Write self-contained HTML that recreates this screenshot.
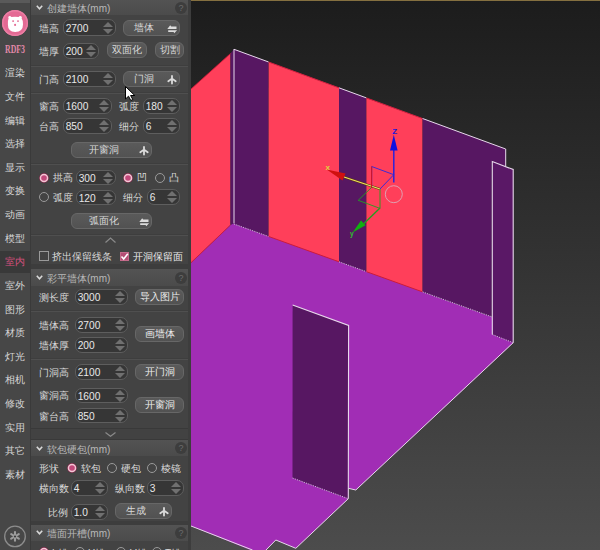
<!DOCTYPE html><html><head><meta charset="utf-8"><style>
*{margin:0;padding:0;box-sizing:border-box}
html,body{width:600px;height:550px;overflow:hidden;background:#444}
body{position:relative;font-family:"Liberation Sans",sans-serif}
.t{position:absolute;white-space:nowrap;line-height:14px;font-weight:500}
#side{position:absolute;left:0;top:0;width:30px;height:550px;background:#474747}
#pborder{position:absolute;left:30px;top:0;width:1px;height:550px;background:#3a3a3a}
#panel{position:absolute;left:31px;top:0;width:157px;height:550px;background:#434343}
#sb{position:absolute;left:188px;top:0;width:3px;height:550px;background:#3d3d3d}
.hdr{position:absolute;left:31px;width:157px;background:linear-gradient(#535353,#4b4b4b)}
.sep{position:absolute;left:31px;width:157px;height:2px;background:#3e3e3e;border-bottom:1px solid #4f4f4f}
.q{position:absolute;width:12px;height:12px;border-radius:50%;background:#3d3d3d;color:#6c6c6c;font-size:9px;line-height:12px;text-align:center}
.inp{position:absolute;background:#363636;border:1px solid #5e5e5e;border-radius:7px;color:#e8e8e8;font-size:10.2px;overflow:hidden}
.inp span{position:absolute;left:1.7px;top:0.8px}
.inp i{position:absolute;right:2px;width:0;height:0}
.inp .up{border-left:5px solid transparent;border-right:5px solid transparent;border-bottom:5px solid #707070}
.inp .dn{border-left:5px solid transparent;border-right:5px solid transparent;border-top:5px solid #707070}
.inp .mid{display:none}
.btn{position:absolute;background:linear-gradient(#5a5a5a,#525252);border:1px solid #676767;border-radius:6px;color:#d8d8d8;font-size:10px;font-weight:500}
.btn.bright{color:#ececec}
.ic{position:absolute}
.rad{position:absolute;width:10px;height:10px;border-radius:50%;border:1.2px solid #9a9a9a}
.rad.on{border:1.9px solid #f3c6d5;background:#c2487a;box-shadow:0 0 0 0.6px #7a2a48}
.cb{position:absolute;width:10px;height:10px;border:1.2px solid #9a9a9a}
#vp{position:absolute;left:191px;top:0;width:409px;height:550px;background:linear-gradient(#1c1c1c 0%,#4c4c4c 100%)}
</style></head><body><div id="side"></div><div id="pborder"></div><div id="panel"></div><div id="sb"></div><div style="position:absolute;left:0;top:0;width:30px;height:3px;background:#5a5a5a"></div><div style="position:absolute;left:2.2px;top:9.9px;width:26px;height:26px;border-radius:50%;background:#e46a94;box-shadow:inset 0 0 0 1.5px #ec7ea4"></div><svg style="position:absolute;left:6px;top:15px" width="18" height="19" viewBox="0 0 18 19"><path d="M2.6 3.2Q1.6 1.6 3 1.2Q4.6 0.8 5.4 2Q9 1.7 12.6 2Q13.4 0.8 15 1.2Q16.6 1.6 15.6 3.2Q17 5 17 9.5Q17 16.8 9.2 17Q1.8 16.8 1.9 9.5Q1.8 5 2.6 3.2Z" fill="#fff"/><circle cx="7.1" cy="6.1" r="0.95" fill="#e46a94"/><circle cx="12" cy="6.1" r="0.95" fill="#e46a94"/><circle cx="9.1" cy="9.9" r="1.05" fill="#e46a94"/></svg><div class="t" style="left:5px;top:42px;font-family:'Liberation Serif',serif;font-weight:bold;font-size:11.5px;color:#e088a8;transform:scaleX(0.68);transform-origin:0 0">RDF3</div><div class="t" style="left:5px;top:66.3px;font-size:10px;color:#d6d6d6;">渲染</div><div class="t" style="left:5px;top:89.92px;font-size:10px;color:#d6d6d6;">文件</div><div class="t" style="left:5px;top:113.53999999999999px;font-size:10px;color:#d6d6d6;">编辑</div><div class="t" style="left:5px;top:137.16px;font-size:10px;color:#d6d6d6;">选择</div><div class="t" style="left:5px;top:160.78px;font-size:10px;color:#d6d6d6;">显示</div><div class="t" style="left:5px;top:184.4px;font-size:10px;color:#d6d6d6;">变换</div><div class="t" style="left:5px;top:208.01999999999998px;font-size:10px;color:#d6d6d6;">动画</div><div class="t" style="left:5px;top:231.64px;font-size:10px;color:#d6d6d6;">模型</div><div style="position:absolute;left:0;top:251px;width:30px;height:22px;background:#393939"></div><div class="t" style="left:5px;top:255.26px;font-size:10px;color:#d8507e;">室内</div><div class="t" style="left:5px;top:278.88px;font-size:10px;color:#d6d6d6;">室外</div><div class="t" style="left:5px;top:302.5px;font-size:10px;color:#d6d6d6;">图形</div><div class="t" style="left:5px;top:326.12px;font-size:10px;color:#d6d6d6;">材质</div><div class="t" style="left:5px;top:349.74px;font-size:10px;color:#d6d6d6;">灯光</div><div class="t" style="left:5px;top:373.36px;font-size:10px;color:#d6d6d6;">相机</div><div class="t" style="left:5px;top:396.98px;font-size:10px;color:#d6d6d6;">修改</div><div class="t" style="left:5px;top:420.6px;font-size:10px;color:#d6d6d6;">实用</div><div class="t" style="left:5px;top:444.22px;font-size:10px;color:#d6d6d6;">其它</div><div class="t" style="left:5px;top:467.84000000000003px;font-size:10px;color:#d6d6d6;">素材</div><svg style="position:absolute;left:0;top:520px" width="30" height="30" viewBox="0 0 30 30"><circle cx="15" cy="16.4" r="10.3" fill="none" stroke="#8c8c8c" stroke-width="1.3"/><g stroke="#9c9c9c" stroke-width="2.1" stroke-linecap="round"><line x1="15" y1="12" x2="15" y2="20.8"/><line x1="11.2" y1="14.2" x2="18.8" y2="18.6"/><line x1="11.2" y1="18.6" x2="18.8" y2="14.2"/></g><circle cx="15" cy="16.4" r="1" fill="#333"/></svg><div class="hdr" style="top:0px;height:15px"></div><svg style="position:absolute;left:35.5px;top:5.2px" width="7" height="5" viewBox="0 0 7 5"><path d="M0.8 0.8L3.5 3.8L6.2 0.8" stroke="#d8d8d8" stroke-width="1.6" fill="none"/></svg><div class="t" style="left:47px;top:2.0px;font-size:10px;color:#b8b8b8;font-weight:500">创建墙体(mm)</div><div class="q" style="left:175px;top:1.5px">?</div><div class="t" style="left:39px;top:21.5px;font-size:10px;color:#d8d8d8;">墙高</div><div class="inp" style="left:63px;top:19px;width:53px;height:17px"><span style="line-height:15px">2700</span><i class="up" style="top:1.9000000000000004px"></i><i class="dn" style="top:8.5px"></i></div><div class="btn" style="left:123px;top:20px;width:57px;height:16px"><span style="position:absolute;left:0;width:40px;text-align:center;line-height:14px">墙体</span><svg class="ic" style="left:42.5px;top:3.5px" width="11" height="9" viewBox="0 0 11 9"><path d="M0.3 3.9H9.5V1.6H4.2L3.2 0.3Z M1.2 5.3H10.1L7.2 8.2L6.6 7H1.2Z" fill="#dcdcdc"/></svg></div><div class="t" style="left:39px;top:44.5px;font-size:10px;color:#d8d8d8;">墙厚</div><div class="inp" style="left:63px;top:43px;width:36px;height:16px"><span style="line-height:14px">200</span><i class="up" style="top:1.4000000000000004px"></i><i class="dn" style="top:8.0px"></i></div><div class="btn" style="left:107px;top:42px;width:40px;height:16px"><span style="position:absolute;left:0;width:38px;text-align:center;line-height:14px">双面化</span></div><div class="btn" style="left:155px;top:42px;width:29px;height:16px"><span style="position:absolute;left:0;width:27px;text-align:center;line-height:14px">切割</span></div><div class="sep" style="top:64.6px"></div><div class="t" style="left:39px;top:72.5px;font-size:10px;color:#d8d8d8;">门高</div><div class="inp" style="left:63px;top:71px;width:53px;height:16px"><span style="line-height:14px">2100</span><i class="up" style="top:1.4000000000000004px"></i><i class="dn" style="top:8.0px"></i></div><div class="btn" style="left:123px;top:71px;width:57px;height:16px"><span style="position:absolute;left:0;width:40px;text-align:center;line-height:14px">门洞</span><svg class="ic" style="left:43.4px;top:3.3px" width="10" height="10" viewBox="0 0 10 10"><path d="M5 1V8.5M1.3 6.2L5 3.6L8.7 6.2" stroke="#dcdcdc" stroke-width="1.8" fill="none" stroke-linecap="round"/></svg></div><div class="sep" style="top:91.6px"></div><div class="t" style="left:39px;top:99.5px;font-size:10px;color:#d8d8d8;">窗高</div><div class="inp" style="left:63px;top:98px;width:49px;height:16px"><span style="line-height:14px">1600</span><i class="up" style="top:1.4000000000000004px"></i><i class="dn" style="top:8.0px"></i></div><div class="t" style="left:119px;top:99.5px;font-size:10px;color:#d8d8d8;">弧度</div><div class="inp" style="left:143px;top:98px;width:37px;height:16px"><span style="line-height:14px">180</span><i class="up" style="top:1.4000000000000004px"></i><i class="dn" style="top:8.0px"></i></div><div class="t" style="left:39px;top:119.5px;font-size:10px;color:#d8d8d8;">台高</div><div class="inp" style="left:63px;top:118px;width:49px;height:16px"><span style="line-height:14px">850</span><i class="up" style="top:1.4000000000000004px"></i><i class="dn" style="top:8.0px"></i></div><div class="t" style="left:119px;top:119.5px;font-size:10px;color:#d8d8d8;">细分</div><div class="inp" style="left:143px;top:118px;width:37px;height:16px"><span style="line-height:14px">6</span><i class="up" style="top:1.4000000000000004px"></i><i class="dn" style="top:8.0px"></i></div><div class="btn" style="left:71px;top:142px;width:81px;height:16px"><span style="position:absolute;left:0;width:64px;text-align:center;line-height:14px">开窗洞</span><svg class="ic" style="left:67.4px;top:3.3px" width="10" height="10" viewBox="0 0 10 10"><path d="M5 1V8.5M1.3 6.2L5 3.6L8.7 6.2" stroke="#dcdcdc" stroke-width="1.8" fill="none" stroke-linecap="round"/></svg></div><div class="sep" style="top:162.8px"></div><svg style="position:absolute;left:38.2px;top:171.8px" width="12" height="12" viewBox="0 0 12 12"><circle cx="6" cy="6" r="4.9" fill="#7a2a48"/><circle cx="6" cy="6" r="4.3" fill="#f3c6d5"/><circle cx="6" cy="6" r="2.8" fill="#c2487a"/></svg><div class="t" style="left:53px;top:171.0px;font-size:10px;color:#d8d8d8;">拱高</div><div class="inp" style="left:76px;top:170px;width:40px;height:15px"><span style="line-height:13px">300</span><i class="up" style="top:0.9000000000000004px"></i><i class="dn" style="top:7.5px"></i></div><svg style="position:absolute;left:122px;top:171.5px" width="12" height="12" viewBox="0 0 12 12"><circle cx="6" cy="6" r="4.9" fill="#7a2a48"/><circle cx="6" cy="6" r="4.3" fill="#f3c6d5"/><circle cx="6" cy="6" r="2.8" fill="#c2487a"/></svg><div class="t" style="left:137px;top:171.0px;font-size:10px;color:#d8d8d8;">凹</div><div class="rad" style="left:155px;top:172.5px"></div><div class="t" style="left:169px;top:171.0px;font-size:10px;color:#d8d8d8;">凸</div><div class="rad" style="left:39px;top:192.2px"></div><div class="t" style="left:53px;top:191.0px;font-size:10px;color:#d8d8d8;">弧度</div><div class="inp" style="left:76px;top:190px;width:40px;height:15px"><span style="line-height:13px">120</span><i class="up" style="top:0.9000000000000004px"></i><i class="dn" style="top:7.5px"></i></div><div class="t" style="left:123px;top:191.0px;font-size:10px;color:#d8d8d8;">细分</div><div class="inp" style="left:147px;top:189px;width:33px;height:16px"><span style="line-height:14px">6</span><i class="up" style="top:1.4000000000000004px"></i><i class="dn" style="top:8.0px"></i></div><div class="btn" style="left:71px;top:213px;width:81px;height:16px"><span style="position:absolute;left:0;width:64px;text-align:center;line-height:14px">弧面化</span><svg class="ic" style="left:66.5px;top:3.5px" width="11" height="9" viewBox="0 0 11 9"><path d="M0.3 3.9H9.5V1.6H4.2L3.2 0.3Z M1.2 5.3H10.1L7.2 8.2L6.6 7H1.2Z" fill="#dcdcdc"/></svg></div><div class="sep" style="top:234px"></div><svg style="position:absolute;left:105px;top:237px" width="11" height="6" viewBox="0 0 11 6"><path d="M0.5 5.5L5.5 1L10.5 5.5" stroke="#8a8a8a" stroke-width="1.2" fill="none"/></svg><div class="cb" style="left:39px;top:251px"></div><div class="t" style="left:52px;top:249.5px;font-size:10px;color:#d8d8d8;">挤出保留线条</div><div class="cb" style="left:119.5px;top:251.5px;width:9.5px;height:9.5px;background:#b44d74;border-color:#c46a8a"></div><svg style="position:absolute;left:120px;top:252px" width="9" height="9" viewBox="0 0 9 9"><path d="M1.5 4.5L3.7 7L7.8 1.8" stroke="#fff" stroke-width="1.6" fill="none"/></svg><div class="t" style="left:133px;top:249.5px;font-size:9.6px;color:#e8e8e8;">开洞保留面</div><div style="position:absolute;left:31px;top:263.5px;width:157px;height:5.5px;background:#3d3d3d"></div><div class="hdr" style="top:269px;height:17px"></div><svg style="position:absolute;left:35.5px;top:275.2px" width="7" height="5" viewBox="0 0 7 5"><path d="M0.8 0.8L3.5 3.8L6.2 0.8" stroke="#d8d8d8" stroke-width="1.6" fill="none"/></svg><div class="t" style="left:47px;top:272.0px;font-size:10px;color:#b8b8b8;font-weight:500">彩平墙体(mm)</div><div class="q" style="left:175px;top:271.5px">?</div><div class="t" style="left:39px;top:290.5px;font-size:10px;color:#d8d8d8;">测长度</div><div class="inp" style="left:75px;top:289px;width:53px;height:16px"><span style="line-height:14px">3000</span><i class="up" style="top:1.4000000000000004px"></i><i class="dn" style="top:8.0px"></i></div><div class="btn bright" style="left:135px;top:289px;width:49px;height:16px"><span style="position:absolute;left:0;width:47px;text-align:center;line-height:14px">导入图片</span></div><div class="sep" style="top:310px"></div><div class="t" style="left:39px;top:318.5px;font-size:10px;color:#d8d8d8;">墙体高</div><div class="inp" style="left:75px;top:317px;width:53px;height:16px"><span style="line-height:14px">2700</span><i class="up" style="top:1.4000000000000004px"></i><i class="dn" style="top:8.0px"></i></div><div class="t" style="left:39px;top:338.5px;font-size:10px;color:#d8d8d8;">墙体厚</div><div class="inp" style="left:75px;top:337px;width:53px;height:16px"><span style="line-height:14px">200</span><i class="up" style="top:1.4000000000000004px"></i><i class="dn" style="top:8.0px"></i></div><div class="btn bright" style="left:135px;top:326px;width:49px;height:16px"><span style="position:absolute;left:0;width:47px;text-align:center;line-height:14px">画墙体</span></div><div class="sep" style="top:358px"></div><div class="t" style="left:39px;top:365.5px;font-size:10px;color:#d8d8d8;">门洞高</div><div class="inp" style="left:75px;top:364px;width:53px;height:16px"><span style="line-height:14px">2100</span><i class="up" style="top:1.4000000000000004px"></i><i class="dn" style="top:8.0px"></i></div><div class="btn bright" style="left:135px;top:364px;width:49px;height:16px"><span style="position:absolute;left:0;width:47px;text-align:center;line-height:14px">开门洞</span></div><div class="t" style="left:39px;top:388.5px;font-size:10px;color:#d8d8d8;">窗洞高</div><div class="inp" style="left:75px;top:388px;width:53px;height:15px"><span style="line-height:13px">1600</span><i class="up" style="top:0.9000000000000004px"></i><i class="dn" style="top:7.5px"></i></div><div class="t" style="left:39px;top:409.5px;font-size:10px;color:#d8d8d8;">窗台高</div><div class="inp" style="left:75px;top:408px;width:53px;height:15px"><span style="line-height:13px">850</span><i class="up" style="top:0.9000000000000004px"></i><i class="dn" style="top:7.5px"></i></div><div class="btn bright" style="left:135px;top:397px;width:49px;height:16px"><span style="position:absolute;left:0;width:47px;text-align:center;line-height:14px">开窗洞</span></div><div style="position:absolute;left:31px;top:428px;width:157px;height:12px;background:#424242;border-top:1px solid #393939;border-bottom:1px solid #393939"></div><svg style="position:absolute;left:105px;top:432px" width="11" height="5" viewBox="0 0 11 5"><path d="M0.5 0.5L5.5 4.3L10.5 0.5" stroke="#8a8a8a" stroke-width="1.2" fill="none"/></svg><div class="hdr" style="top:440px;height:16px"></div><svg style="position:absolute;left:35.5px;top:445.7px" width="7" height="5" viewBox="0 0 7 5"><path d="M0.8 0.8L3.5 3.8L6.2 0.8" stroke="#d8d8d8" stroke-width="1.6" fill="none"/></svg><div class="t" style="left:47px;top:442.5px;font-size:10px;color:#b8b8b8;font-weight:500">软包硬包(mm)</div><div class="q" style="left:175px;top:442.0px">?</div><div class="t" style="left:39px;top:462.0px;font-size:10px;color:#d8d8d8;">形状</div><svg style="position:absolute;left:66px;top:462.3px" width="12" height="12" viewBox="0 0 12 12"><circle cx="6" cy="6" r="4.9" fill="#7a2a48"/><circle cx="6" cy="6" r="4.3" fill="#f3c6d5"/><circle cx="6" cy="6" r="2.8" fill="#c2487a"/></svg><div class="t" style="left:81px;top:462.0px;font-size:10px;color:#d8d8d8;">软包</div><div class="rad" style="left:107px;top:463.3px"></div><div class="t" style="left:120.5px;top:462.0px;font-size:10px;color:#d8d8d8;">硬包</div><div class="rad" style="left:147px;top:463.3px"></div><div class="t" style="left:161px;top:462.0px;font-size:10px;color:#d8d8d8;">棱镜</div><div class="t" style="left:39px;top:481.5px;font-size:10px;color:#d8d8d8;">横向数</div><div class="inp" style="left:71px;top:480px;width:37px;height:16px"><span style="line-height:14px">4</span><i class="up" style="top:1.4000000000000004px"></i><i class="dn" style="top:8.0px"></i></div><div class="t" style="left:115px;top:481.5px;font-size:10px;color:#d8d8d8;">纵向数</div><div class="inp" style="left:147px;top:480px;width:37px;height:16px"><span style="line-height:14px">3</span><i class="up" style="top:1.4000000000000004px"></i><i class="dn" style="top:8.0px"></i></div><div class="t" style="left:47.5px;top:505.5px;font-size:10px;color:#d8d8d8;">比例</div><div class="inp" style="left:71px;top:504px;width:37px;height:16px"><span style="line-height:14px">1.0</span><i class="up" style="top:1.4000000000000004px"></i><i class="dn" style="top:8.0px"></i></div><div class="btn" style="left:115px;top:503px;width:57px;height:16px"><span style="position:absolute;left:0;width:40px;text-align:center;line-height:14px">生成</span><svg class="ic" style="left:43.4px;top:3.3px" width="10" height="10" viewBox="0 0 10 10"><path d="M5 1V8.5M1.3 6.2L5 3.6L8.7 6.2" stroke="#dcdcdc" stroke-width="1.8" fill="none" stroke-linecap="round"/></svg></div><div style="position:absolute;left:31px;top:520.5px;width:157px;height:4px;background:#3d3d3d"></div><div class="hdr" style="top:524.5px;height:16.5px"></div><svg style="position:absolute;left:35.5px;top:530.45px" width="7" height="5" viewBox="0 0 7 5"><path d="M0.8 0.8L3.5 3.8L6.2 0.8" stroke="#d8d8d8" stroke-width="1.6" fill="none"/></svg><div class="t" style="left:47px;top:527.25px;font-size:10px;color:#b8b8b8;font-weight:500">墙面开槽(mm)</div><div class="q" style="left:175px;top:526.75px">?</div><svg style="position:absolute;left:38px;top:546px" width="12" height="12" viewBox="0 0 12 12"><circle cx="6" cy="6" r="4.9" fill="#7a2a48"/><circle cx="6" cy="6" r="4.3" fill="#f3c6d5"/><circle cx="6" cy="6" r="2.8" fill="#c2487a"/></svg><div class="rad" style="left:74.5px;top:547px"></div><div class="rad" style="left:116px;top:547px"></div><div class="rad" style="left:151.5px;top:547px"></div><div class="t" style="left:52px;top:546.5px;font-size:10px;color:#d8d8d8;">L槽</div><div class="t" style="left:88px;top:546.5px;font-size:10px;color:#d8d8d8;">U槽</div><div class="t" style="left:130px;top:546.5px;font-size:10px;color:#d8d8d8;">V槽</div><div class="t" style="left:165px;top:546.5px;font-size:10px;color:#d8d8d8;">T槽</div><div id="vp"></div><svg style="position:absolute;left:0;top:0" width="600" height="550" viewBox="0 0 600 550"><defs><clipPath id="vc"><rect x="191" y="1" width="409" height="549"/></clipPath></defs><g clip-path="url(#vc)"><polygon points="191,89 230.5,53.5 230.5,225 191,262.7" fill="#ff3f5a" stroke="none" stroke-width="0"/><polygon points="230.5,53.5 234,49 234,223.3 230.5,225" fill="#571762" stroke="none" stroke-width="0"/><polygon points="191,262.7 230.5,225 234,223.3 491.8,316.808 513.4,342.7 355.8,490 348.3,488.3 348.3,498.7 295.8,548.3 275.8,540 265,551 252.5,551 191,526" fill="#a12db5" stroke="none" stroke-width="0"/><polygon points="234,49.3 268.6,61.998200000000004 268.6,236.45600000000002 234,224.0" fill="#571762" stroke="none" stroke-width="0"/><polygon points="268.6,61.998200000000004 339,87.835 339,261.8 268.6,236.45600000000002" fill="#ff3f5a" stroke="none" stroke-width="0"/><polygon points="339,87.835 366.4,97.89079999999998 366.4,271.664 339,261.8" fill="#571762" stroke="none" stroke-width="0"/><polygon points="366.4,97.89079999999998 422.6,118.5162 422.6,291.896 366.4,271.664" fill="#ff3f5a" stroke="none" stroke-width="0"/><polygon points="422.6,118.5162 505.7,149.01389999999998 505.7,166.4 491.8,161.6 491.8,316.808 422.6,291.896" fill="#571762" stroke="none" stroke-width="0"/><line x1="234" y1="49.3" x2="268.6" y2="61.998200000000004" stroke="#e8d8ec" stroke-width="1"/><line x1="268.6" y1="61.998200000000004" x2="339" y2="87.835" stroke="#d02040" stroke-width="1"/><line x1="339" y1="87.835" x2="366.4" y2="97.89079999999998" stroke="#e8d8ec" stroke-width="1"/><line x1="366.4" y1="97.89079999999998" x2="422.6" y2="118.5162" stroke="#d02040" stroke-width="1"/><line x1="422.6" y1="118.5162" x2="505.7" y2="149.01389999999998" stroke="#e8d8ec" stroke-width="1"/><line x1="505.7" y1="149.01389999999998" x2="505.7" y2="166.4" stroke="#e8d8ec" stroke-width="1"/><line x1="234" y1="49" x2="234" y2="223.3" stroke="#e8d8ec" stroke-width="1"/><line x1="234" y1="224.0" x2="268.6" y2="236.45600000000002" stroke="#d8c8e0" stroke-width="0.9" stroke-dasharray="1.2 1.2"/><line x1="268.6" y1="236.45600000000002" x2="339" y2="261.8" stroke="#c81838" stroke-width="0.9"/><line x1="339" y1="261.8" x2="366.4" y2="271.664" stroke="#d8c8e0" stroke-width="0.9" stroke-dasharray="1.2 1.2"/><line x1="366.4" y1="271.664" x2="422.6" y2="291.896" stroke="#c81838" stroke-width="0.9"/><line x1="422.6" y1="291.896" x2="491.8" y2="316.808" stroke="#d8c8e0" stroke-width="0.9" stroke-dasharray="1.2 1.2"/><line x1="191" y1="262.7" x2="230.5" y2="225" stroke="#d01838" stroke-width="0.8"/><line x1="191" y1="89" x2="230.5" y2="53.5" stroke="#d01838" stroke-width="0.8"/><polygon points="492.3,161.6 513.2,169.5 513.2,342.7 492.3,334.5" fill="#5a1866" stroke="none" stroke-width="0"/><polyline points="492.3,334.5 492.3,161.6 513.2,169.5 513.2,342.7" fill="none" stroke="#e8d8ec" stroke-width="1.1"/><polyline points="191,526 252.5,550" fill="none" stroke="#e8d8ec" stroke-width="1"/><polyline points="265,551 275.8,540 295.8,548.3 348.3,498.7" fill="none" stroke="#e8d8ec" stroke-width="1"/><polyline points="355.8,490 513.2,342.7" fill="none" stroke="#e8d8ec" stroke-width="1"/><polygon points="292.6,305 348.6,325.5 348.3,498.7 292.5,478" fill="#571762" stroke="none" stroke-width="0"/><polyline points="292.6,305 348.6,325.5 348.3,498.7" fill="none" stroke="#e8d8ec" stroke-width="1.1"/><line x1="292.5" y1="478" x2="348.3" y2="498.7" stroke="#d8c8e0" stroke-width="0.9" stroke-dasharray="1.2 1.2"/><line x1="492.3" y1="334.5" x2="513.2" y2="342.7" stroke="#d8c8e0" stroke-width="0.9" stroke-dasharray="1.2 1.2"/><line x1="348.3" y1="488.3" x2="355.8" y2="490" stroke="#e8d8ec" stroke-width="1"/><line x1="393.8" y1="182.5" x2="393.8" y2="150" stroke="#2020e0" stroke-width="1.4"/><path d="M393.8 134.8Q395 140 397.6 150.5L390 150.5Q392.6 140 393.8 134.8Z" fill="#1010e0"/><text x="392.3" y="133.5" font-size="8" font-weight="bold" fill="#1818d8" font-family="Liberation Sans">Z</text><line x1="380" y1="189" x2="344" y2="177" stroke="#5a3a10" stroke-width="2.2"/><line x1="380" y1="189" x2="344" y2="177" stroke="#f0e060" stroke-width="1.1"/><path d="M326.7 169.5L345.5 173.5L342.5 180.5Z" fill="#d01010"/><text x="325.5" y="170" font-size="8" font-weight="bold" fill="#e0d040" font-family="Liberation Sans">x</text><polyline points="371.7,187.7 371.7,166.5 393.8,174.7 380,189" fill="none" stroke="#2828e0" stroke-width="0.9"/><line x1="371.7" y1="166.5" x2="371.5" y2="188" stroke="#e01010" stroke-width="0.9"/><polyline points="371.3,187.7 358.2,200.3 380,208.4 380,189" fill="none" stroke="#20a020" stroke-width="0.9"/><line x1="380" y1="208" x2="364" y2="223.5" stroke="#20a020" stroke-width="1.3"/><path d="M352.6 232.6L365.6 225.3L361.0 220.4Z" fill="#10b010"/><text x="350" y="235.5" font-size="6.5" font-weight="bold" fill="#30c030" font-family="Liberation Sans">y</text><circle cx="393.8" cy="194.2" r="8.5" fill="none" stroke="#e0a0b0" stroke-width="1"/></g><rect x="191" y="0" width="409" height="1" fill="#857040"/></svg><svg style="position:absolute;left:125px;top:86px" width="11" height="15" viewBox="0 0 11 15"><path d="M0.5 0.5L0.5 13L3.5 10.2L5.8 14.5L7.8 13.5L5.6 9.5L9.8 9.5Z" fill="#fff" stroke="#000" stroke-width="1"/></svg></body></html>
